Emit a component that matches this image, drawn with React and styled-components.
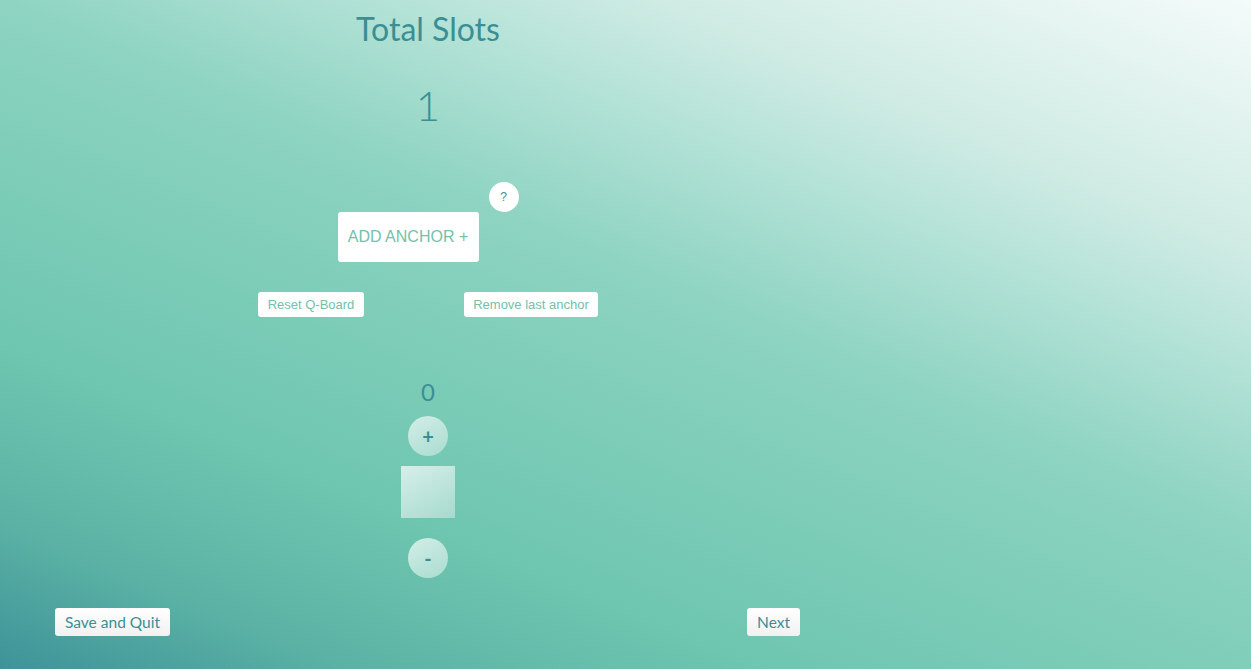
import React from 'react';
import styled, { createGlobalStyle } from 'styled-components';

const GlobalStyle = createGlobalStyle`
  html, body {
    margin: 0;
    padding: 0;
    height: 100%;
  }
  body {
    font-family: Lato, "Open Sans", sans-serif;
    background: linear-gradient(23deg,
      #3d9398 0%,
      #5cb3a5 13%,
      #6ec6b0 27%,
      #86d1bd 50%,
      #8fd4c2 56%,
      #b0e1d5 68%,
      #cfebe4 79%,
      #f4fbfa 100%);
    min-height: 669px;
    overflow: hidden;
  }
`;

/*
* Page layout
* */
const Page = styled.div`
  width: 856px;
  height: 669px;
  display: flex;
  flex-direction: column;
  align-items: center;
`;

const Title = styled.h1`
  margin: 10px 0 0;
  font-weight: 400;
  font-size: 32px;
  line-height: 38px;
  color: #3b8f94;
`;

const SlotCount = styled.div`
  margin-top: 32px;
  font-weight: 300;
  font-size: 42px;
  line-height: 50px;
  color: #3b8f94;
`;

const AnchorRow = styled.div`
  margin-top: 52px;
  display: flex;
  align-items: flex-start;
  gap: 10px;
`;

const AddAnchorButton = styled.button`
  margin-top: 30px;
  width: 141px;
  height: 50px;
  border: none;
  border-radius: 3px;
  background: #fff;
  color: #72c2aa;
  font-family: "Liberation Sans", Arial, sans-serif;
  font-size: 16px;
  cursor: pointer;
`;

const HelpBubble = styled.button`
  width: 30px;
  height: 30px;
  border: none;
  border-radius: 50%;
  background: #fff;
  color: #3b8f94;
  font-family: "Liberation Sans", Arial, sans-serif;
  font-size: 12px;
  padding: 0;
`;

const SmallRow = styled.div`
  margin-top: 30px;
  display: flex;
  gap: 100px;
`;

const SmallButton = styled.button`
  height: 25px;
  width: ${(p) => p.$w}px;
  border: none;
  border-radius: 3px;
  background: #fff;
  color: #72c2aa;
  font-family: "Liberation Sans", Arial, sans-serif;
  font-size: 13px;
  padding: 0;
`;

const Counter = styled.div`
  margin-top: 60px;
  font-size: 24px;
  line-height: 30px;
  color: #3b8f94;
`;

const RoundButton = styled.button`
  margin-top: ${(p) => p.$mt}px;
  width: 40px;
  height: 40px;
  border: none;
  border-radius: 50%;
  background: linear-gradient(150deg, #d3eee7 0%, #a9dccf 100%);
  color: #3b8f94;
  font-family: Lato, sans-serif;
  font-size: 20px;
  font-weight: 700;
  padding: 0;
  line-height: 40px;
`;

const SlotBox = styled.div`
  margin-top: 10px;
  width: 54px;
  height: 52px;
  background: linear-gradient(150deg, #d6efe9 0%, #a6dacd 100%);
`;

const Footer = styled.div`
  margin-top: 30px;
  align-self: stretch;
  padding: 0 56px 0 55px;
  display: flex;
  justify-content: space-between;
`;

const FooterButton = styled.button`
  height: 28px;
  padding: 0 10px;
  border: none;
  border-radius: 3px;
  background: linear-gradient(to bottom, #ffffff 0%, #f1f1f1 100%);
  color: #3b8f94;
  font-family: Lato, sans-serif;
  font-size: 15.5px;
`;

export default function App() {
  return (
    <>
      <GlobalStyle />
      <Page>
        <Title>Total Slots</Title>
        <SlotCount>1</SlotCount>

        <AnchorRow>
          <AddAnchorButton>ADD ANCHOR +</AddAnchorButton>
          <HelpBubble>?</HelpBubble>
        </AnchorRow>

        <SmallRow>
          <SmallButton $w={106}>Reset Q-Board</SmallButton>
          <SmallButton $w={134}>Remove last anchor</SmallButton>
        </SmallRow>

        <Counter>0</Counter>
        <RoundButton $mt={9}>+</RoundButton>
        <SlotBox />
        <RoundButton $mt={20}>-</RoundButton>

        <Footer>
          <FooterButton>Save and Quit</FooterButton>
          <FooterButton>Next</FooterButton>
        </Footer>
      </Page>
    </>
  );
}
